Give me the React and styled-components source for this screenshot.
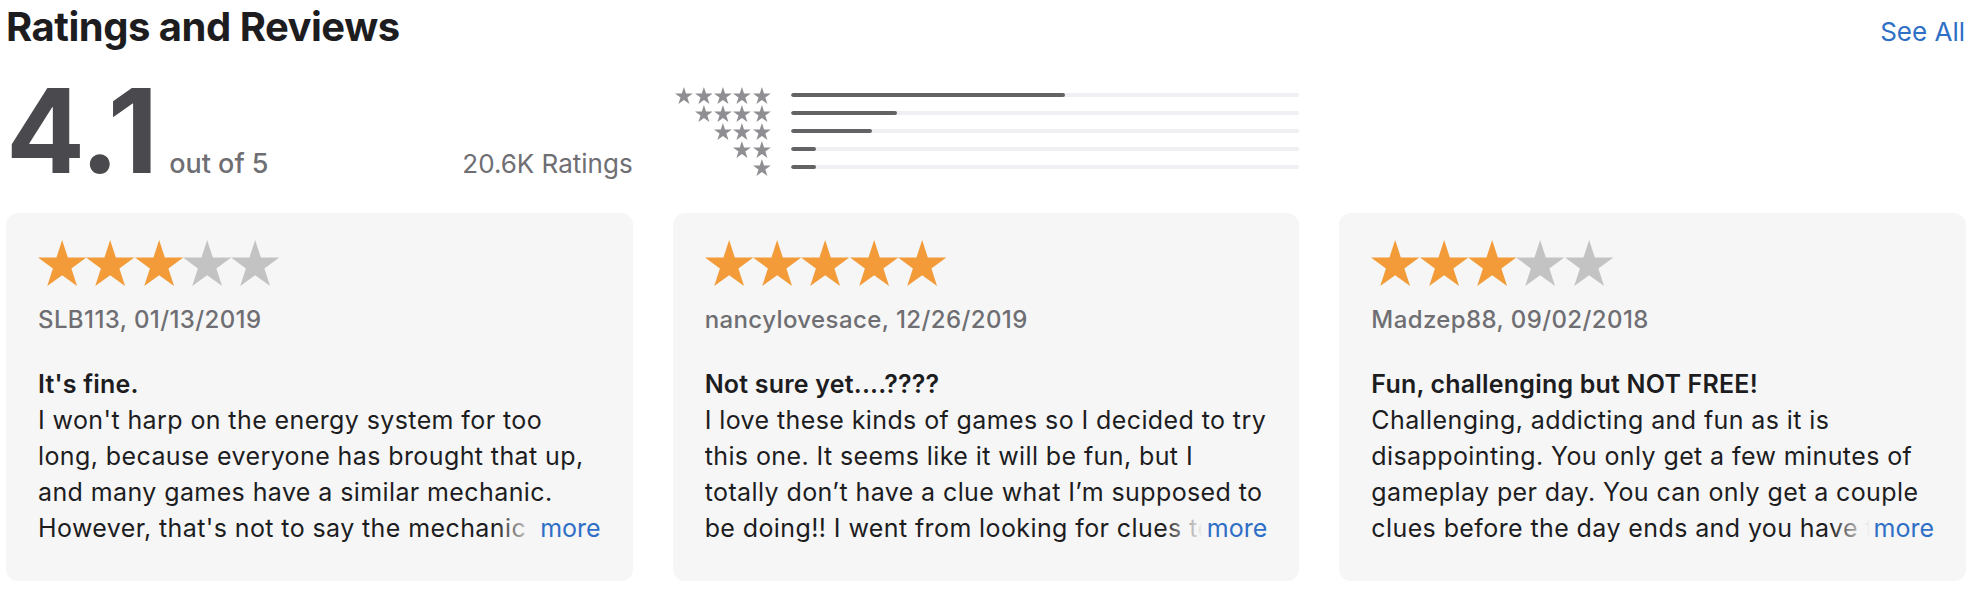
import React from "react";
import styled, { createGlobalStyle } from "styled-components";

const GlobalStyle = createGlobalStyle`
  body {
    margin: 0;
    background: #fff;
    font-family: Inter, "Liberation Sans", sans-serif;
    -webkit-font-smoothing: antialiased;
  }
`;

const Page = styled.div`
  width: 1960px;
  padding: 3px 0 0 6px;
`;

const Header = styled.div`
  display: flex;
  justify-content: space-between;
  align-items: baseline;
`;

const Title = styled.h2`
  margin: 0;
  font-size: 40px;
  line-height: 48px;
  font-weight: 700;
  letter-spacing: -0.5px;
  color: #1d1d1f;
`;

const SeeAll = styled.a`
  margin-right: 1px;
  font-size: 26px;
  color: #2f6fc6;
  text-decoration: none;
`;

const Columns = styled.div`
  display: grid;
  grid-template-columns: repeat(3, minmax(0, 1fr));
  column-gap: 40px;
`;

const Summary = styled(Columns)`
  margin-top: 21px;
  align-items: start;
`;

const Average = styled.div`
  display: flex;
  align-items: baseline;
`;

const Score = styled.span`
  font-size: 117px;
  line-height: 117px;
  font-weight: 700;
  letter-spacing: -1px;
  color: #4a4a4e;
`;

const OutOf = styled.span`
  margin-left: 12px;
  font-size: 27px;
  font-weight: 500;
  color: #6e6e73;
`;

const Count = styled.span`
  margin-left: auto;
  font-size: 26px;
  color: #6e6e73;
`;

const Histogram = styled.div`
  margin-top: 14px;
  display: flex;
  flex-direction: column;
`;

const HistRow = styled.div`
  display: flex;
  align-items: center;
  height: 18px;
  gap: 20px;
`;

const HistStars = styled.div`
  width: 98px;
  display: flex;
  justify-content: flex-end;
  gap: 1.6px;
`;

const Track = styled.div`
  flex: 1;
  height: 4px;
  border-radius: 2px;
  background: #efeff4;
  overflow: hidden;
`;

const Fill = styled.div`
  height: 100%;
  border-radius: 2px;
  background: #636366;
`;

const Cards = styled(Columns)`
  margin-top: 24px;
`;

const Card = styled.div`
  min-width: 0;
  background: #f6f6f6;
  border-radius: 12px;
  padding: 27px 32px 35px;
`;

const Stars = styled.div`
  display: flex;
`;

const Author = styled.div`
  margin-top: 19px;
  font-size: 24px;
  line-height: 30px;
  font-weight: 500;
  letter-spacing: 0.4px;
  color: #6e6e73;
`;

const ReviewTitle = styled.h3`
  margin: 31px 0 0;
  font-size: 25px;
  line-height: 36px;
  font-weight: 600;
  letter-spacing: 0.2px;
  color: #1d1d1f;
`;

const Body = styled.div`
  position: relative;
  min-width: 0;
  font-size: 25px;
  line-height: 36px;
  letter-spacing: 0.4px;
  color: #1d1d1f;
`;

const Line = styled.span`
  display: block;
  white-space: nowrap;
  overflow: hidden;
`;

const More = styled.a`
  position: absolute;
  right: 0;
  bottom: 0;
  padding-left: 44px;
  letter-spacing: 0;
  color: #2f6fc6;
  text-decoration: none;
  background: linear-gradient(to right, rgba(246, 246, 246, 0), #f6f6f6 40px);
`;

const STAR = "50,0 61.23,34.55 97.55,34.55 68.17,55.9 79.39,90.45 50,69.1 20.61,90.45 31.83,55.9 2.45,34.55 38.77,34.55";

function Star({ size, color }) {
  return (
    <svg width={size * 1.05} height={size} viewBox="2.45 0 95.1 90.45">
      <polygon points={STAR} fill={color} />
    </svg>
  );
}

const histogram = [54, 21, 16, 5, 5];

const reviews = [
  {
    rating: 3,
    author: "SLB113, 01/13/2019",
    title: "It's fine.",
    lines: [
      "I won't harp on the energy system for too",
      "long, because everyone has brought that up,",
      "and many games have a similar mechanic.",
      "However, that's not to say the mechanic is a good one"
    ]
  },
  {
    rating: 5,
    author: "nancylovesace, 12/26/2019",
    title: "Not sure yet....????",
    lines: [
      "I love these kinds of games so I decided to try",
      "this one. It seems like it will be fun, but I",
      "totally don’t have a clue what I’m supposed to",
      "be doing!! I went from looking for clues to solving"
    ]
  },
  {
    rating: 3,
    author: "Madzep88, 09/02/2018",
    title: "Fun, challenging but NOT FREE!",
    lines: [
      "Challenging, addicting and fun as it is",
      "disappointing. You only get a few minutes of",
      "gameplay per day. You can only get a couple",
      "clues before the day ends and you have to wait"
    ]
  }
];

export default function App() {
  return (
    <Page>
      <GlobalStyle />
      <Header>
        <Title>Ratings and Reviews</Title>
        <SeeAll href="#">See All</SeeAll>
      </Header>

      <Summary>
        <Average>
          <Score>4.1</Score>
          <OutOf>out of 5</OutOf>
          <Count>20.6K Ratings</Count>
        </Average>
        <Histogram>
          {histogram.map((pct, i) => (
            <HistRow key={i}>
              <HistStars>
                {Array.from({ length: 5 - i }).map((_, j) => (
                  <Star key={j} size={17} color="#8e8e93" />
                ))}
              </HistStars>
              <Track>
                <Fill style={{ width: `${pct}%` }} />
              </Track>
            </HistRow>
          ))}
        </Histogram>
      </Summary>

      <Cards>
        {reviews.map((r) => (
          <Card key={r.author}>
            <Stars>
              {[0, 1, 2, 3, 4].map((n) => (
                <Star key={n} size={46} color={n < r.rating ? "#f29b38" : "#c3c3c3"} />
              ))}
            </Stars>
            <Author>{r.author}</Author>
            <ReviewTitle>{r.title}</ReviewTitle>
            <Body>
              {r.lines.map((line) => (
                <Line key={line}>{line}</Line>
              ))}
              <More href="#">more</More>
            </Body>
          </Card>
        ))}
      </Cards>
    </Page>
  );
}
